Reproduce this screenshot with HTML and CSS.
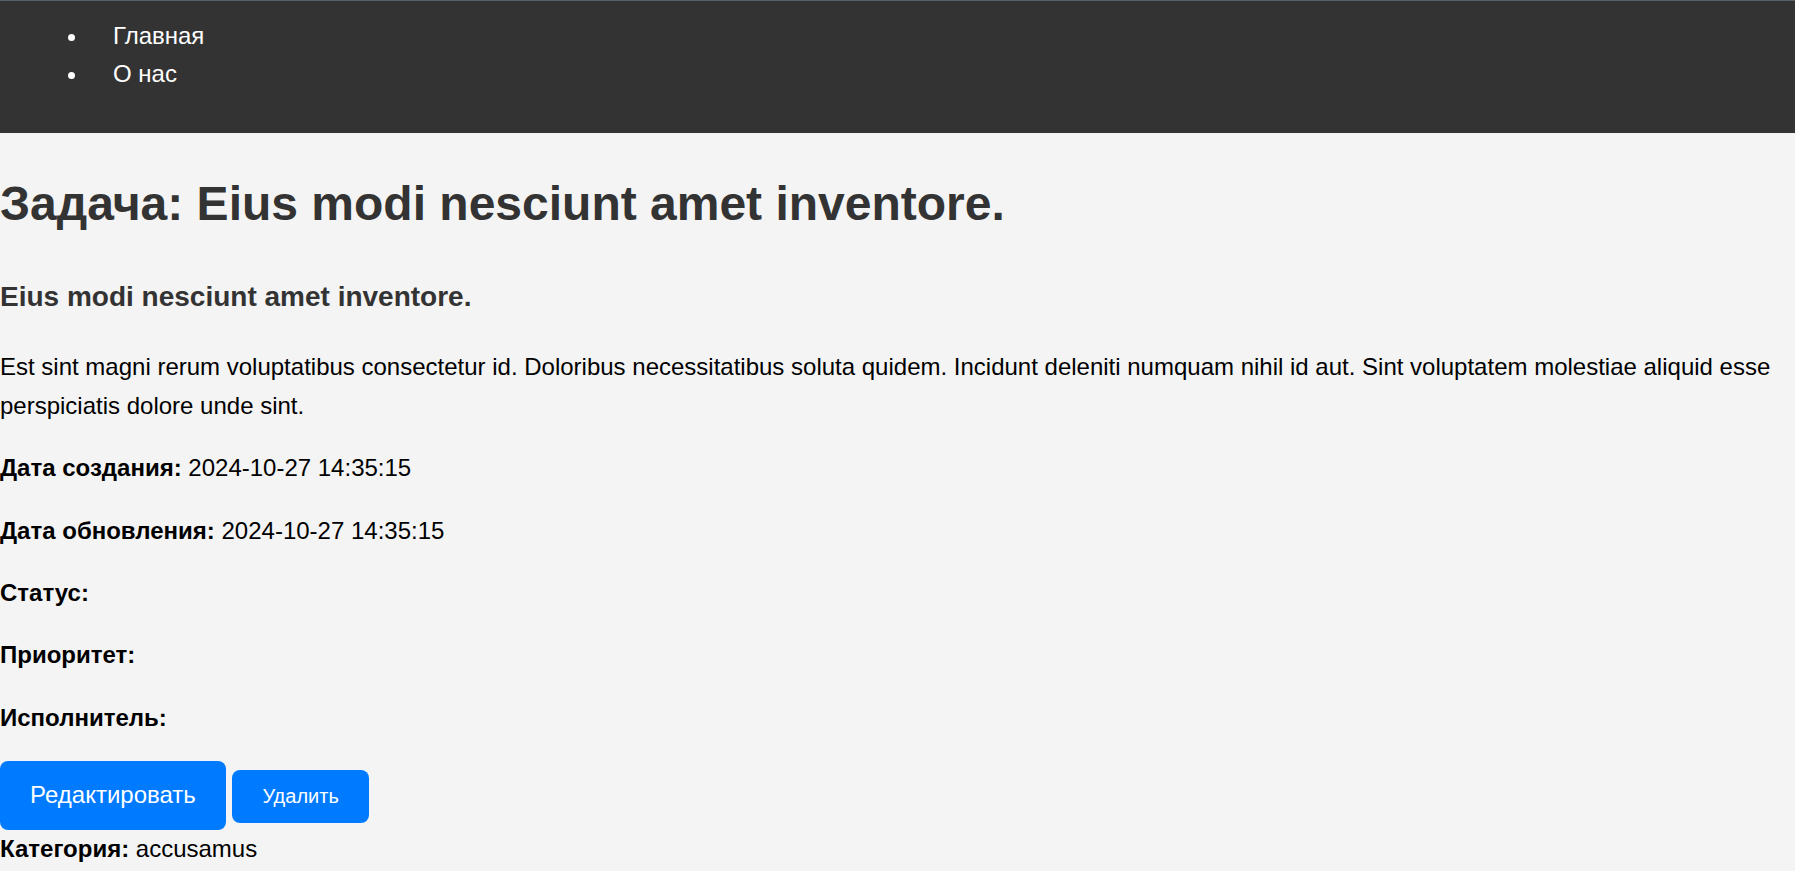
FILE: index.html
```html
<!DOCTYPE html>
<html lang="ru">
<head>
<meta charset="utf-8">
<title>Задача: Eius modi nesciunt amet inventore.</title>
<link rel="stylesheet" href="styles.css">
</head>
<body>
<header class="site-header">
  <nav class="site-nav">
    <ul class="nav-list">
      <li class="nav-item"><a class="nav-link" href="#">Главная</a></li>
      <li class="nav-item"><a class="nav-link" href="#">О нас</a></li>
    </ul>
  </nav>
</header>
<main class="task">
  <h1 class="task-title">Задача: Eius modi nesciunt amet inventore.</h1>
  <h2 class="task-subtitle">Eius modi nesciunt amet inventore.</h2>
  <p class="task-text">Est sint magni rerum voluptatibus consectetur id. Doloribus necessitatibus soluta quidem. Incidunt deleniti numquam nihil id aut. Sint voluptatem molestiae aliquid esse perspiciatis dolore unde sint.</p>
  <p class="task-field"><strong>Дата создания:</strong> 2024-10-27 14:35:15</p>
  <p class="task-field"><strong>Дата обновления:</strong> 2024-10-27 14:35:15</p>
  <p class="task-field"><strong>Статус:</strong> </p>
  <p class="task-field"><strong>Приоритет:</strong> </p>
  <p class="task-field"><strong>Исполнитель:</strong> </p>
  <div class="task-actions"><a class="btn btn-edit" href="#">Редактировать</a> <button class="btn btn-delete" type="button">Удалить</button></div>
  <div class="task-category"><strong>Категория:</strong> accusamus</div>
</main>
</body>
</html>
```
FILE: styles.css
```css
html, body {
  margin: 0;
  padding: 0;
}

body {
  background: #f4f4f4;
  color: #000;
  font-family: "Liberation Sans", Arial, sans-serif;
  font-size: 24px;
  line-height: 1.6;
}

.site-header {
  background: #333;
  color: #fff;
  border-top: 1px solid #56616c;
  padding: 16px 0 15px;
}

.nav-list {
  margin: 0 0 24px;
  padding-left: 89px;
}

.nav-item {
  padding-left: 24px;
}

.nav-link {
  color: #fff;
  text-decoration: none;
}

.task-title {
  color: #333;
  font-size: 48px;
  line-height: 1.6;
  margin: 33px 0 32px;
}

.task-subtitle {
  color: #333;
  font-size: 28px;
  line-height: 1.6;
  margin: 28px 0 29px;
}

.task-text,
.task-field {
  margin: 24px 0;
}

.btn {
  display: inline-block;
  background: #007bff;
  color: #fff;
  border: none;
  border-radius: 8px;
  padding: 15px 30px;
  text-decoration: none;
  font-family: "Liberation Sans", Arial, sans-serif;
}

.btn-edit {
  font-size: 24px;
  line-height: 1.6;
}

.btn-delete {
  font-size: 20px;
  line-height: normal;
  cursor: pointer;
}
```
